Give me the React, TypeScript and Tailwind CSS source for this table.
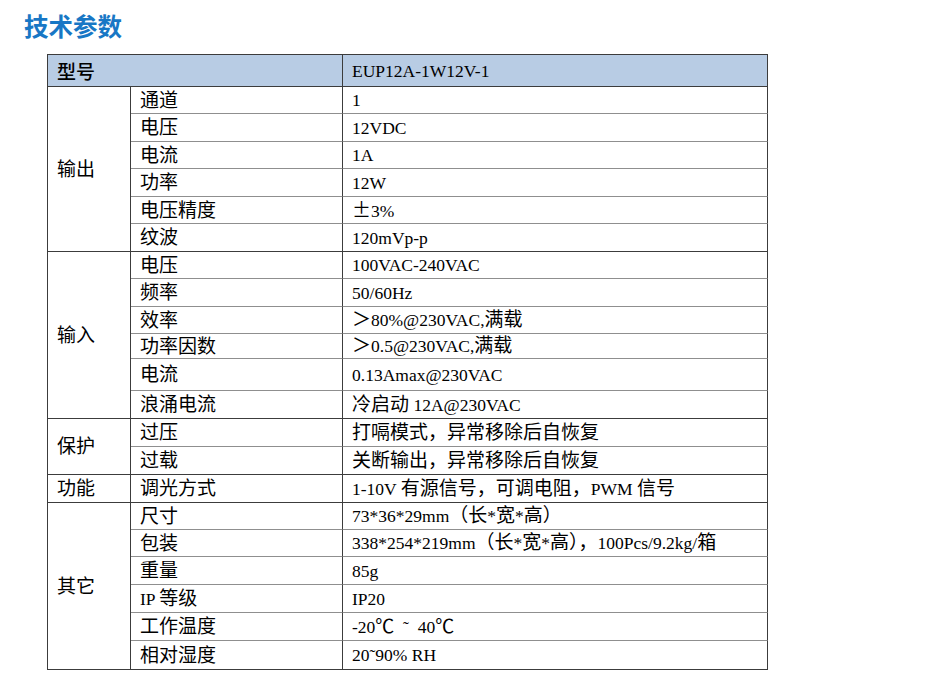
import React from 'react';

type Row = { label: string; value: string; h: number };
type Group = { name: string; rows: Row[] };

const GROUPS: Group[] = [
  {
    name: '输出',
    rows: [
      { label: '通道', value: '1', h: 27 },
      { label: '电压', value: '12VDC', h: 28 },
      { label: '电流', value: '1A', h: 27 },
      { label: '功率', value: '12W', h: 28 },
      { label: '电压精度', value: '±3%', h: 27 },
      { label: '纹波', value: '120mVp-p', h: 28 },
    ],
  },
  {
    name: '输入',
    rows: [
      { label: '电压', value: '100VAC-240VAC', h: 27 },
      { label: '频率', value: '50/60Hz', h: 28 },
      { label: '效率', value: '＞80%@230VAC,满载', h: 27 },
      { label: '功率因数', value: '＞0.5@230VAC,满载', h: 25 },
      { label: '电流', value: '0.13Amax@230VAC', h: 32 },
      { label: '浪涌电流', value: '冷启动 12A@230VAC', h: 28 },
    ],
  },
  {
    name: '保护',
    rows: [
      { label: '过压', value: '打嗝模式，异常移除后自恢复', h: 28 },
      { label: '过载', value: '关断输出，异常移除后自恢复', h: 28 },
    ],
  },
  {
    name: '功能',
    rows: [{ label: '调光方式', value: '1-10V 有源信号，可调电阻，PWM 信号', h: 28 }],
  },
  {
    name: '其它',
    rows: [
      { label: '尺寸', value: '73*36*29mm（长*宽*高）', h: 27 },
      { label: '包装', value: '338*254*219mm（长*宽*高），100Pcs/9.2kg/箱', h: 27 },
      { label: '重量', value: '85g', h: 28 },
      { label: 'IP 等级', value: 'IP20', h: 28 },
      { label: '工作温度', value: '-20℃  ˜  40℃', h: 28 },
      { label: '相对湿度', value: '20˜90% RH', h: 29 },
    ],
  },
];

const WIDE = /[\u2100-\u21ff\u3000-\u9fff\uff00-\uffef±]/;

// latin runs are narrower than the CJK glyphs in the original, so shrink them
const Mixed = ({ text }: { text: string }) => (
  <>
    {text.split(/([\u2100-\u21ff\u3000-\u9fff\uff00-\uffef±]+)/).map((part, i) =>
      part === '' ? null : WIDE.test(part) ? (
        <span key={i} className={part === '±' ? "[font-family:'Noto_Sans_CJK_SC',sans-serif]" : ''}>
          {part}
        </span>
      ) : (
        <span key={i} className="text-[17.5px] whitespace-pre">
          {part}
        </span>
      )
    )}
  </>
);

const cell = 'border-r border-b border-r-[#3c3c3c] border-b-[#8f8f8f] whitespace-nowrap p-0 align-middle';

export default function App() {
  return (
    <div className="min-h-[692px] w-[928px] bg-white pl-[24px] pt-[11px] text-black [font-family:'Liberation_Serif','Noto_Sans_CJK_SC',serif]">
      <h1 className="text-[24.5px] leading-[30px] font-bold text-[#1877c5] [font-family:'Noto_Sans_CJK_SC','Noto_Sans',sans-serif]">
        技术参数
      </h1>

      <table className="mt-[13px] ml-[23px] w-[720px] table-fixed border-separate border-spacing-0 border-l border-t border-[#3c3c3c] text-[19px] leading-none">
        <colgroup>
          <col className="w-[83px]" />
          <col className="w-[212px]" />
          <col className="w-[425px]" />
        </colgroup>
        <tbody>
          <tr className="h-[32px] bg-[#b8cce4]">
            <td
              colSpan={2}
              className="border-r border-b border-[#3c3c3c] pl-[9px] align-middle font-medium [font-family:'Noto_Sans_CJK_SC',sans-serif]"
            >
              型号
            </td>
            <td className="border-r border-b border-[#3c3c3c] pl-[9px] align-middle">
              <Mixed text="EUP12A-1W12V-1" />
            </td>
          </tr>
          {GROUPS.map((g) =>
            g.rows.map((r, i) => (
              <tr key={g.name + r.label} style={{ height: r.h }}>
                {i === 0 && (
                  <td rowSpan={g.rows.length} className={`${cell} !border-b-[#3c3c3c] pl-[9px]`}>
                    {g.name}
                  </td>
                )}
                <td
                  className={`${cell} pl-[9px] ${i === g.rows.length - 1 ? '!border-b-[#3c3c3c]' : ''}`}
                >
                  <Mixed text={r.label} />
                </td>
                <td
                  className={`${cell} pl-[9px] ${i === g.rows.length - 1 ? '!border-b-[#3c3c3c]' : ''}`}
                >
                  <Mixed text={r.value} />
                </td>
              </tr>
            ))
          )}
        </tbody>
      </table>
    </div>
  );
}
